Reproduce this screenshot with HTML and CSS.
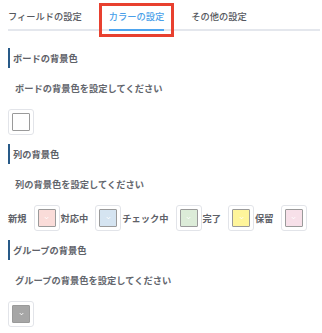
FILE: index.html
```html
<!DOCTYPE html>
<html>
  <head>
    <title>カラーの設定</title>
    <link rel="stylesheet" href="styles.css">
  </head>
  <body>
    <div class="tabs">
      <div class="tab">フィールドの設定</div>
      <div class="tab active">カラーの設定</div>
      <div class="tab">その他の設定</div>
    </div>
    <!-- annotation box around the active tab -->
    <div class="mark"></div>

    <div class="section">
      <div class="heading">ボードの背景色</div>
      <div class="desc">ボードの背景色を設定してください</div>
      <div class="pickers">
        <div class="picker"><span class="swatch" style="background: #ffffff;"><svg viewBox="0 0 6 4"><polyline points="1,1 3,3 5,1"/></svg></span></div>
      </div>
    </div>

    <div class="section">
      <div class="heading">列の背景色</div>
      <div class="desc">列の背景色を設定してください</div>
      <div class="pickers">
        <span class="label">新規</span>
        <div class="picker"><span class="swatch" style="background: #fadcd9;"><svg viewBox="0 0 6 4"><polyline points="1,1 3,3 5,1"/></svg></span></div>
        <span class="label">対応中</span>
        <div class="picker"><span class="swatch" style="background: #d5e4f1;"><svg viewBox="0 0 6 4"><polyline points="1,1 3,3 5,1"/></svg></span></div>
        <span class="label">チェック中</span>
        <div class="picker"><span class="swatch" style="background: #dcecd8;"><svg viewBox="0 0 6 4"><polyline points="1,1 3,3 5,1"/></svg></span></div>
        <span class="label">完了</span>
        <div class="picker"><span class="swatch" style="background: #fff59b;"><svg viewBox="0 0 6 4"><polyline points="1,1 3,3 5,1"/></svg></span></div>
        <span class="label">保留</span>
        <div class="picker"><span class="swatch" style="background: #f7e0e9;"><svg viewBox="0 0 6 4"><polyline points="1,1 3,3 5,1"/></svg></span></div>
      </div>
    </div>

    <div class="section">
      <div class="heading">グループの背景色</div>
      <div class="desc">グループの背景色を設定してください</div>
      <div class="pickers">
        <div class="picker"><span class="swatch" style="background: #a6a6a6;"><svg viewBox="0 0 6 4"><polyline points="1,1 3,3 5,1"/></svg></span></div>
      </div>
    </div>
  </body>
</html>
```

FILE: styles.css
```css
body {
  margin: 0;
  padding: 0 2px 0 8px;
  background: #ffffff;
  font-family: "Noto Sans CJK JP", "Noto Sans", sans-serif;
  font-size: 9.25px;
  color: #5c5f66;
  position: relative;
}

/* tabs */
.tabs {
  display: flex;
  gap: 27px;
  border-bottom: 2px solid #e4e7ed;
}

.tab {
  padding-top: 4px;
  line-height: 25px;
  margin-bottom: -2px;
  border-bottom: 2px solid transparent;
  color: #55585e;
  font-weight: 500;
}

.tab.active {
  color: #4a9fe9;
  border-bottom-color: #4ea4ee;
}

.mark {
  position: absolute;
  left: 99px;
  top: 3px;
  width: 69px;
  height: 28px;
  border: 3px solid #e8402f;
}

/* sections */
.section {
  margin-top: 17px;
}

.section + .section {
  margin-top: 9px;
}

.heading {
  border-left: 2px solid #285a88;
  padding-left: 3px;
  line-height: 20px;
  font-weight: 700;
  color: #5e6168;
}

.desc {
  margin-top: 10px;
  padding-left: 7px;
  line-height: 20px;
  font-weight: 700;
  color: #63666d;
}

.pickers {
  display: flex;
  align-items: center;
  margin-top: 11px;
}

.label {
  font-weight: 700;
  color: #5e6168;
  margin-right: 7px;
}

.picker {
  width: 26px;
  height: 26px;
  box-sizing: border-box;
  border: 1px solid #e2e4e9;
  border-radius: 3px;
  padding: 3px;
  margin-right: 1px;
}

.swatch {
  display: flex;
  align-items: center;
  justify-content: center;
  width: 100%;
  height: 100%;
  box-sizing: border-box;
  border: 1px solid #9a9a9a;
  border-radius: 1px;
}

.swatch svg {
  width: 5px;
  height: 4px;
  fill: none;
  stroke: #ffffff;
  stroke-width: 1.2;
}
```
